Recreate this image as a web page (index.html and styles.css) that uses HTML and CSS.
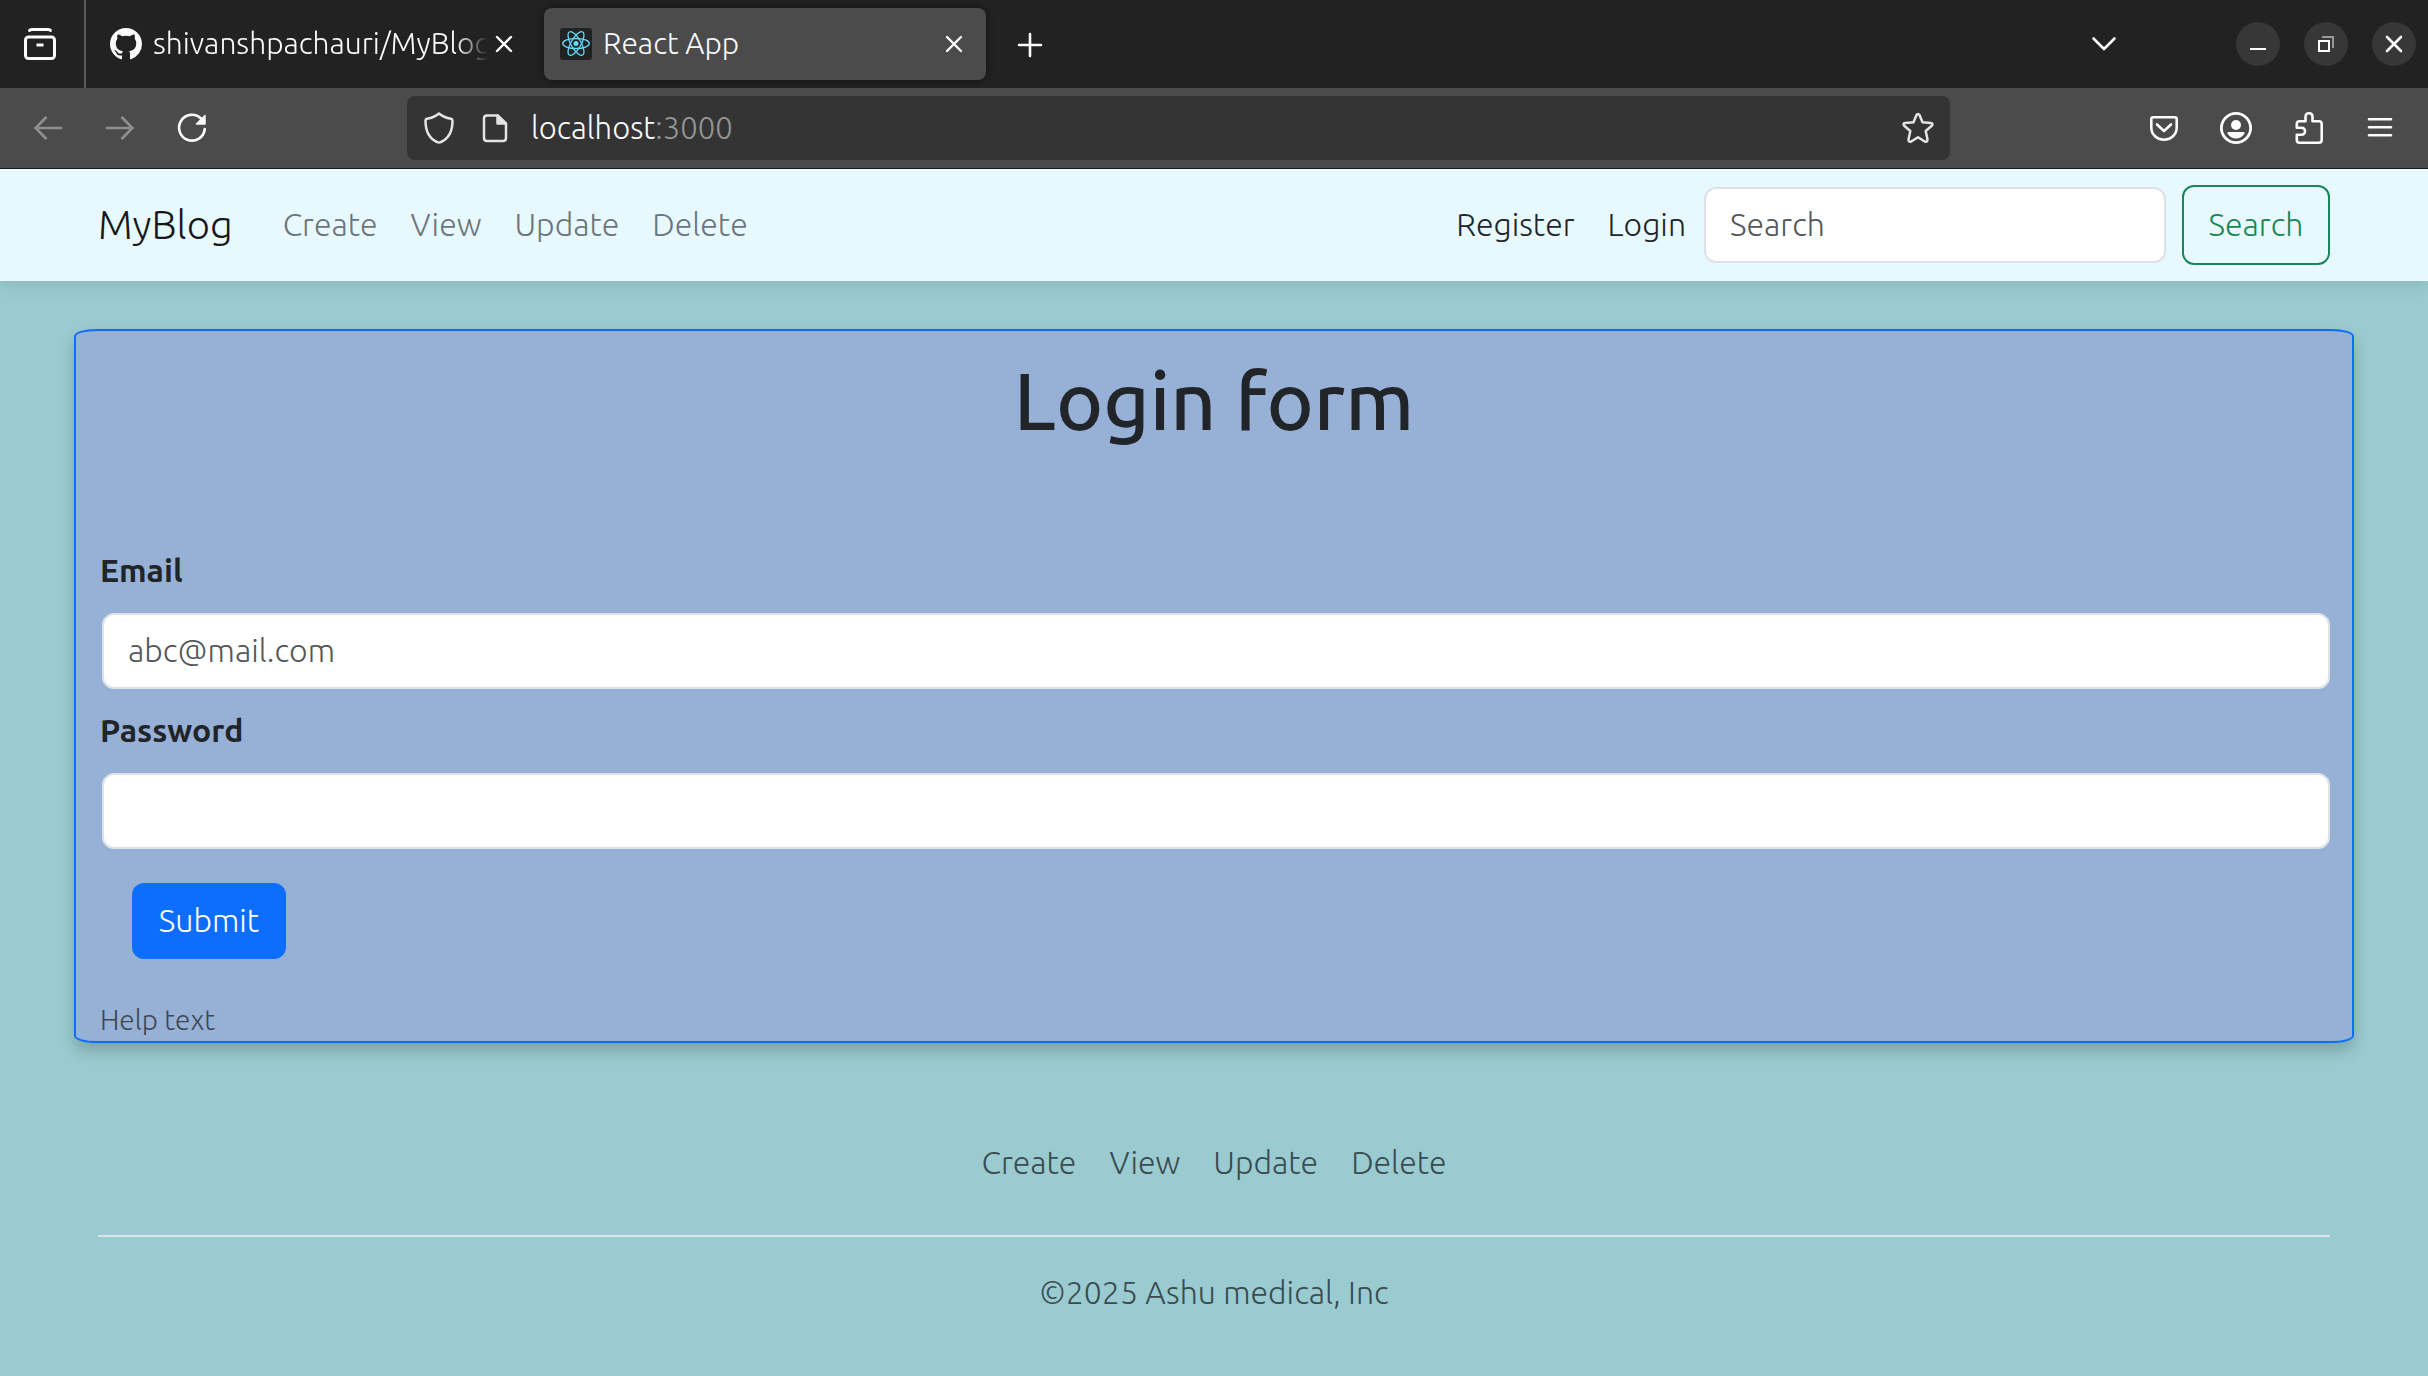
FILE: index.html
```html
<!DOCTYPE html>
<html lang="en">
<head>
<meta charset="utf-8">
<meta name="viewport" content="width=device-width, initial-scale=1">
<title>React App</title>
<link rel="stylesheet" href="styles.css">
</head>
<body>
<header class="browser">
  <div class="tabstrip">
    <button class="tab-overview" type="button" aria-label="Recent browsing">
      <svg class="icon" viewBox="0 0 32 32" fill="none" stroke="currentColor" stroke-width="3" stroke-linecap="round" stroke-linejoin="round"><path d="M5.500 2.500Q6 1.500 8 1.500H24Q26 1.500 26.500 2.500"/><rect x="1.500" y="9" width="29" height="21.500" rx="3"/><path d="M12.500 17H19.500" stroke-linecap="butt" stroke-width="3"/></svg>
    </button>
    <div class="tab">
      <svg class="icon" viewBox="0 0 16 16" fill="currentColor"><path d="M8 0C3.580 0 0 3.580 0 8c0 3.540 2.290 6.530 5.470 7.590.4.070.55-.17.55-.38 0-.19-.01-.82-.01-1.490-2.010.37-2.530-.49-2.690-.94-.09-.23-.48-.94-.82-1.130-.28-.15-.68-.52-.01-.53.63-.01 1.080.58 1.230.82.72 1.210 1.870.87 2.330.66.07-.52.28-.87.51-1.070-1.780-.2-3.640-.89-3.640-3.950 0-.87.31-1.590.82-2.150-.08-.2-.36-1.020.08-2.120 0 0 .67-.21 2.200.82.64-.18 1.320-.27 2-.27s1.360.09 2 .27c1.530-1.040 2.200-.82 2.200-.82.44 1.100.16 1.920.08 2.120.51.56.82 1.270.82 2.150 0 3.070-1.870 3.750-3.650 3.950.29.25.54.73.54 1.480 0 1.070-.01 1.930-.01 2.200 0 .21.15.46.55.38A8.010 8.010 0 0 0 16 8c0-4.420-3.580-8-8-8z"/></svg>
      <span class="tab-title tab-title-faded">shivanshpachauri/MyBlog</span>
      <button class="tab-close" type="button" aria-label="Close tab"><svg viewBox="0 0 20 20" stroke="currentColor" stroke-width="2.400" stroke-linecap="round"><path d="M3 3L17 17M17 3L3 17"/></svg></button>
    </div>
    <div class="tab tab-active">
      <svg class="icon" viewBox="0 0 32 32" fill="none"><rect width="32" height="32" rx="3" fill="#222"/><g stroke="#61dafb" stroke-width="1.300"><ellipse cx="16" cy="15.500" rx="13.300" ry="5"/><ellipse cx="16" cy="15.500" rx="13.300" ry="5" transform="rotate(60 16 15.500)"/><ellipse cx="16" cy="15.500" rx="13.300" ry="5" transform="rotate(120 16 15.500)"/></g><circle cx="16" cy="15.500" r="2.500" fill="#61dafb"/></svg>
      <span class="tab-title">React App</span>
      <button class="tab-close" type="button" aria-label="Close tab"><svg viewBox="0 0 20 20" stroke="currentColor" stroke-width="2.400" stroke-linecap="round"><path d="M3 3L17 17M17 3L3 17"/></svg></button>
    </div>
    <button class="tool new-tab" type="button" aria-label="New tab"><svg class="icon" viewBox="0 0 32 32" stroke="currentColor" stroke-width="2.600" stroke-linecap="round"><path d="M5 17H27M16 6V28"/></svg></button>
    <div class="window-controls">
      <button class="tool all-tabs" type="button" aria-label="List all tabs"><svg class="icon" viewBox="0 0 32 32" fill="none" stroke="currentColor" stroke-width="2.600" stroke-linecap="round" stroke-linejoin="round"><path d="M5.500 10.500L16 21L26.500 10.500"/></svg></button>
      <button class="window-button" type="button" aria-label="Minimize"><svg class="icon" viewBox="0 0 32 32" stroke="currentColor" stroke-width="2"><path d="M8 21H24"/></svg></button>
      <button class="window-button" type="button" aria-label="Restore"><svg class="icon" viewBox="0 0 32 32" fill="none" stroke="currentColor" stroke-width="2"><path d="M12 9H23V20" opacity=".5"/><rect x="9" y="13" width="10" height="10"/></svg></button>
      <button class="window-button" type="button" aria-label="Close"><svg class="icon" viewBox="0 0 32 32" stroke="currentColor" stroke-width="2.600" stroke-linecap="round"><path d="M9 9L23 23M23 9L9 23"/></svg></button>
    </div>
  </div>
  <div class="toolbar">
    <button class="tool tool-dim" type="button" aria-label="Back"><svg class="icon" viewBox="0 0 32 32" fill="none" stroke="currentColor" stroke-width="2.600"><path d="M30 16H4M14.500 5L3.500 16L14.500 27"/></svg></button>
    <button class="tool tool-dim" type="button" aria-label="Forward"><svg class="icon" viewBox="0 0 32 32" fill="none" stroke="currentColor" stroke-width="2.600"><path d="M2 16H28M17.500 5L28.500 16L17.500 27"/></svg></button>
    <button class="tool" type="button" aria-label="Reload"><svg class="icon" viewBox="0 0 32 32" fill="none" stroke="currentColor" stroke-width="2.600" stroke-linecap="round"><path d="M28.800 17A12.900 12.900 0 1 1 25 6.500"/><path d="M29 3.500V12H20.500Z" fill="currentColor" stroke-width="1.500" stroke-linejoin="round"/></svg></button>
    <div class="address-bar">
      <svg class="icon shield" viewBox="0 0 32 32" fill="none" stroke="currentColor" stroke-width="2.500" stroke-linejoin="round"><path d="M16 1.500C12.500 4.500 8 6 4 6.800Q2.500 7.200 2.500 8.700C2.500 18 5.500 26 14 30Q16 31 18 30C26.500 26 29.500 18 29.500 8.700Q29.500 7.200 28 6.800C24 6 19.500 4.500 16 1.500Z"/></svg>
      <svg class="icon" viewBox="0 0 32 32" fill="none" stroke="currentColor" stroke-width="2.500" stroke-linejoin="round"><path d="M8 3.500H18.500L27 12V26Q27 29 24 29H8Q5 29 5 26V6.500Q5 3.500 8 3.500Z"/><path d="M18.500 3.500V11.500H27Z" fill="currentColor"/></svg>
      <span class="address">localhost<span class="address-port">:3000</span></span>
      <svg class="icon" viewBox="0 0 32 32" fill="none" stroke="currentColor" stroke-width="2.500" stroke-linejoin="round"><path d="M14.500 3Q16 0.800 17.500 3L20.500 10.300L28.800 11Q31.500 11.500 29.800 13.700L23.700 19L25.500 27.500Q25.500 30.500 22.800 29.500L16 25.300L9.200 29.500Q6.500 30.500 6.500 27.500L8.300 19L2.200 13.700Q0.500 11.500 3.200 11L11.500 10.300Z"/></svg>
    </div>
    <button class="tool" type="button" aria-label="Save to Pocket"><svg class="icon" viewBox="0 0 32 32" fill="none" stroke="currentColor" stroke-width="2.600" stroke-linecap="round" stroke-linejoin="round"><path d="M5.300 5.300H26.700Q28.700 5.300 28.700 7.300V15.500C28.700 22 23.500 27.700 16 27.700S3.300 22 3.300 15.500V7.300Q3.300 5.300 5.300 5.300Z"/><path d="M9 12.500L16 19L23 12.500"/></svg></button>
    <button class="tool" type="button" aria-label="Account"><svg class="icon" viewBox="0 0 32 32" fill="none"><circle cx="16" cy="16" r="14.600" stroke="currentColor" stroke-width="2.800"/><circle cx="16" cy="13" r="5" fill="currentColor"/><path d="M8.500 20H23.500Q25 20 24.500 21.500C22.500 25 19.500 26.500 16 26.500S9.500 25 7.500 21.500Q7 20 8.500 20Z" fill="currentColor"/></svg></button>
    <button class="tool" type="button" aria-label="Extensions"><svg class="icon" viewBox="0 0 32 32" fill="none" stroke="currentColor" stroke-width="2.600" stroke-linejoin="round"><path d="M13.500 9.300V5Q13.500 1.300 17 1.300T20.500 5V9.300H27Q29.700 9.300 29.700 12V28Q29.700 30.700 27 30.700H7.500Q4.800 30.700 4.800 28V22.700H9Q13 22.700 13 19.200T9 15.700H4.800V12Q4.800 9.300 7.500 9.300Z"/></svg></button>
    <button class="tool" type="button" aria-label="Menu"><svg class="icon" viewBox="0 0 32 32" stroke="currentColor" stroke-width="2.600" stroke-linecap="round"><path d="M5 7.300H27M5 15.300H27M5 23.300H27"/></svg></button>
  </div>
</header>

<nav class="navbar">
  <a class="brand" href="#">MyBlog</a>
  <ul class="nav-links">
    <li><a href="#">Create</a></li>
    <li><a href="#">View</a></li>
    <li><a href="#">Update</a></li>
    <li><a href="#">Delete</a></li>
  </ul>
  <ul class="nav-links nav-account">
    <li><a href="#">Register</a></li>
    <li><a href="#">Login</a></li>
  </ul>
  <form class="search" role="search">
    <input class="field search-field" type="search" placeholder="Search" aria-label="Search">
    <button class="search-button" type="submit">Search</button>
  </form>
</nav>

<main>
  <form class="login-card">
    <h1 class="login-title">Login form</h1>
    <label class="login-label" for="email">Email</label>
    <input class="field login-field" type="email" id="email" placeholder="abc@mail.com">
    <label class="login-label" for="password">Password</label>
    <input class="field login-field" type="password" id="password">
    <button class="submit" type="submit">Submit</button>
    <small class="help">Help text</small>
  </form>
</main>

<footer class="footer">
  <ul class="nav-links footer-links">
    <li><a href="#">Create</a></li>
    <li><a href="#">View</a></li>
    <li><a href="#">Update</a></li>
    <li><a href="#">Delete</a></li>
  </ul>
  <p class="copyright">©2025 Ashu medical, Inc</p>
</footer>
</body>
</html>
```
FILE: styles.css
```css
*, *::before, *::after {
  box-sizing: border-box;
}

body {
  margin: 0;
  background: #9acbd0;
  color: #212529;
  font-family: Ubuntu, "Open Sans", "Noto Sans", sans-serif;
  font-size: 32px;
  font-weight: 300;
  line-height: 48px;
}

button, input {
  font: inherit;
  color: inherit;
}

button {
  padding: 0;
  border: 0;
  background: none;
}

a {
  color: inherit;
  text-decoration: none;
}

ul {
  margin: 0;
  padding: 0;
  list-style: none;
}

svg {
  display: block;
  flex: none;
}

.icon {
  width: 32px;
  height: 32px;
}

/* Browser window */

.browser {
  border-bottom: 1px solid #18181b;
  background: #4b4b4b;
  color: #fbfbfe;
}

.tabstrip {
  display: flex;
  align-items: center;
  height: 88px;
  padding-right: 12px;
  background: #222;
  font-size: 30px;
}

.tab-overview {
  align-self: stretch;
  padding: 0 28px 0 24px;
  border-right: 2px solid #5a5a5a;
}

.tab {
  display: flex;
  align-items: center;
  width: 442px;
  height: 72px;
  margin-left: 8px;
  padding: 0 16px;
  border-radius: 8px;
}

.tab-active {
  background: #4b4b4b;
  box-shadow: 0 0 8px rgba(0, 0, 0, .5);
}

.tab-title {
  flex: 1;
  min-width: 0;
  margin-left: 11px;
  padding-bottom: 2px;
  line-height: 46px;
  white-space: nowrap;
}

.tab-title-faded {
  mask-image: linear-gradient(to left, transparent, #000 32px);
}

.tab-close {
  flex: none;
  width: 32px;
  padding: 6px;
}

.tool {
  display: grid;
  place-items: center;
  width: 72px;
  height: 64px;
}

.tool-dim {
  color: #8f8f8f;
}

.new-tab {
  margin-left: 8px;
}

.window-controls {
  display: flex;
  align-items: center;
  gap: 24px;
  margin-left: auto;
}

.all-tabs {
  margin-right: 72px;
}

.window-button {
  display: grid;
  place-items: center;
  width: 44px;
  height: 44px;
  border-radius: 50%;
  background: #373737;
}

.toolbar {
  display: flex;
  align-items: center;
  height: 80px;
  padding: 0 12px;
}

.address-bar {
  display: flex;
  flex: 1;
  align-items: center;
  gap: 20px;
  height: 64px;
  margin: 0 178px 0 179px;
  padding: 0 16px;
  border-radius: 8px;
  background: #343434;
  color: #e4e4e6;
}

.shield {
  margin-right: 4px;
}

.address {
  flex: 1;
  color: #fbfbfe;
  font-size: 31px;
}

.address-port {
  color: #959595;
}

/* Site navigation */

.navbar {
  display: flex;
  align-items: center;
  height: 112px;
  padding: 0 98px;
  background: #e7f9ff;
  box-shadow: 0 4px 16px rgba(0, 0, 0, .1);
}

.brand {
  margin-right: 50px;
  color: #141718;
  font-size: 40px;
}

.nav-links {
  display: flex;
  gap: 33px;
  padding-bottom: 2px;
  color: #6c7579;
  line-height: 46px;
}

.nav-account {
  margin-left: auto;
  color: #212529;
}

.search {
  display: flex;
  align-items: center;
  gap: 16px;
  margin-left: 18px;
}

.field {
  display: block;
  height: 76px;
  padding: 0 24px 2px;
  border: 2px solid #dee2e6;
  border-radius: 12px;
  background: #fff;
}

.field::placeholder {
  color: #54575a;
  opacity: 1;
}

.search-field {
  width: 462px;
}

.search-button {
  width: 148px;
  height: 80px;
  padding-bottom: 2px;
  border: 2px solid #198754;
  border-radius: 12px;
  color: #198754;
}

/* Login form */

.login-card {
  display: flex;
  flex-direction: column;
  align-items: flex-start;
  margin: 48px 74px 0;
  padding: 21px 22px 0;
  border: 2px solid #0d6efd;
  border-radius: 1%;
  background: #97b0d6;
  box-shadow: 0 8px 16px rgba(0, 0, 0, .2);
}

.login-title {
  align-self: center;
  margin: 0 0 98px;
  font-size: 80px;
  font-weight: 500;
  line-height: 96px;
}

.login-label {
  margin: 0 2px 19px;
  font-weight: 600;
}

.login-field {
  align-self: stretch;
  margin-left: 4px;
}

.login-field + .login-label {
  margin-top: 17px;
}

.submit {
  min-width: 154px;
  margin: 34px 34px 40px;
  padding: 13px 24px 15px;
  border-radius: 12px;
  background: #0d6efd;
  color: #fff;
}

.help {
  margin-left: 2px;
  color: #3e4855;
  font-size: 28px;
  line-height: 42px;
}

/* Footer */

.footer {
  margin: 96px 98px 0;
  color: #3a4c50;
  text-align: center;
}

.footer-links {
  justify-content: center;
  padding-bottom: 50px;
  border-bottom: 2px solid #dee2e6;
  color: inherit;
}

.copyright {
  margin: 32px 0;
  line-height: 46px;
}
```
